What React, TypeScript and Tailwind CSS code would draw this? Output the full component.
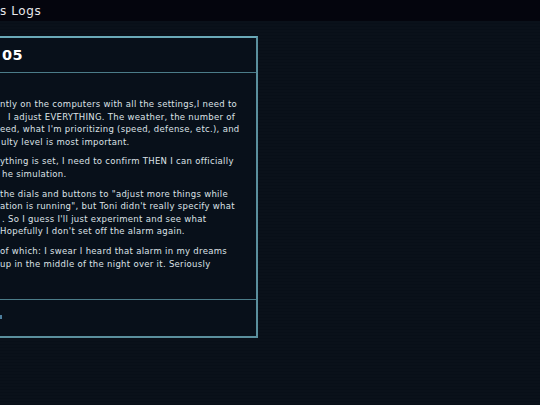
import React from "react";

const paras: { text: string; pad: number }[][] = [
  [
    { text: "ntly on the computers with all the settings,I need to", pad: 0 },
    { text: "I adjust EVERYTHING. The weather, the number of", pad: 8 },
    { text: "eed, what I'm prioritizing (speed, defense, etc.), and", pad: 0 },
    { text: "ulty level is most important.", pad: 1 },
  ],
  [
    { text: "ything is set, I need to confirm THEN I can officially", pad: 0 },
    { text: "he simulation.", pad: 2 },
  ],
  [
    { text: "the dials and buttons to \"adjust more things while", pad: 0 },
    { text: "ation is running\", but Toni didn't really specify what", pad: 0 },
    { text: ". So I guess I'll just experiment and see what", pad: 2 },
    { text: "Hopefully I don't set off the alarm again.", pad: 0 },
  ],
  [
    { text: "of which: I swear I heard that alarm in my dreams", pad: 0 },
    { text: "up in the middle of the night over it. Seriously", pad: 0 },
  ],
];

export default function App() {
  return (
    <div
      className="w-[540px] h-[405px] overflow-hidden flex flex-col bg-[repeating-linear-gradient(to_bottom,#0a111a_0px,#0a111a_2px,#080f18_2px,#080f18_3px)]"
      style={{ fontFamily: '"DejaVu Sans", sans-serif' }}
    >
      <div className="h-[21px] shrink-0 bg-[#04050d] flex items-center text-[12px] tracking-[0.6px] text-[#e8e8ec] leading-none">
        <span>s Logs</span>
      </div>
      <div className="flex-1 pt-[15px]">
        <div className="w-[258px] h-[302px] flex flex-col border-t-2 border-r-2 border-b-2 border-t-[#6aa9b8] border-r-[#5a8f9d] border-b-[#5a8f9d] bg-[#08101a]">
          <div className="h-[35px] shrink-0 flex items-center border-b border-b-[#4b7c89]">
            <span className="text-[14.5px] font-bold text-white leading-none pl-[2px] tracking-[0.5px]">05</span>
          </div>
          <div className="flex-1 pt-[25px] text-[8.5px] tracking-[0.3px] leading-[12.6px] text-[#dde2e7]">
            {paras.map((p, i) => (
              <div key={i} className="mb-[7px]">
                {p.map((l, j) => (
                  <div key={j} className="whitespace-nowrap" style={{ paddingLeft: l.pad }}>
                    {l.text}
                  </div>
                ))}
              </div>
            ))}
          </div>
          <div className="h-[37px] shrink-0 flex items-center border-t border-t-[#4b7c89]">
            <div className="w-[2px] h-[4px] bg-[#4c7d9c] -mt-[3px]" />
          </div>
        </div>
      </div>
    </div>
  );
}
